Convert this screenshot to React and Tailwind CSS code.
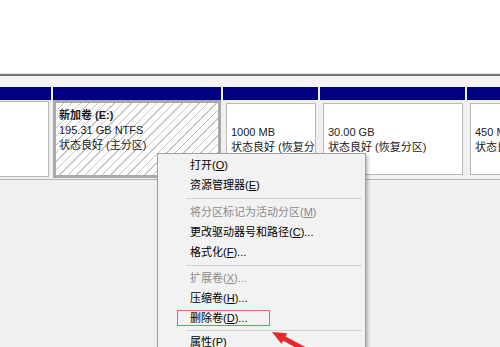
import React from 'react';

const font = "font-['Liberation_Sans','Noto_Sans_CJK_SC',sans-serif]";

const Key = ({ k }) => (
  <>
    (<span className="underline underline-offset-1">{k}</span>)
  </>
);

const MenuItem = ({ label, k, dots, disabled, boxed }) => (
  <div className={`relative flex h-[20px] items-center pl-[32px] text-[11px] ${disabled ? 'text-[#8a8a8a]' : 'text-black'}`}>
    {boxed && <div className="absolute left-[19px] top-[2px] h-[16px] w-[93px] border border-[#e46a6a]" />}
    <span>
      {label}
      <Key k={k} />
      {dots ? '...' : ''}
    </span>
  </div>
);

const Sep = ({ h }) => (
  <div className={`flex items-center pl-[28px] pr-[3px] ${h}`}>
    <div className="h-px w-full bg-[#d4d4d4]" />
  </div>
);

const Partition = ({ w, title, size, status, hatched, first }) => (
  <div className={`flex shrink-0 flex-col ${w}`}>
    <div className="h-[13px] bg-[#000080]" />
    <div className={`h-[78px] ${hatched ? 'p-0' : first ? 'py-[1px] pr-[2px]' : 'p-[3px] pr-[2px]'}`}>
      <div
        className={`h-full overflow-hidden whitespace-nowrap text-[11px] leading-[15px] text-[#1a1a1a] ${
          hatched
            ? 'border-[3px] border-[#a9a9a9] bg-[repeating-linear-gradient(135deg,#ffffff_0px,#ffffff_5px,#c4c4c4_5px,#c4c4c4_6px)] pl-[3px] pt-[5px]'
            : first
            ? 'border border-l-0 border-[#b9b9b9] bg-white'
            : 'border border-[#b9b9b9] bg-white pl-[4px] pt-[6px]'
        }`}
      >
        <div className="h-[15px] font-bold">{title}</div>
        <div>{size}</div>
        <div>{status}</div>
      </div>
    </div>
  </div>
);

export default function App() {
  return (
    <div className={`relative h-[347px] w-[500px] overflow-hidden bg-[#f0f0f0] ${font}`}>
      <div className="h-[73px] bg-white" />
      <div className="h-px bg-[#e4e4e4]" />
      <div className="h-[2px] bg-[#747474]" />
      <div className="h-[11px] bg-[#f4f4f4]" />

      <div className="flex gap-[2px] bg-[#f0f0f0]">
        <Partition w="w-[51px]" first />
        <Partition w="w-[168px]" hatched title="新加卷 (E:)" size="195.31 GB NTFS" status="状态良好 (主分区)" />
        <Partition w="w-[95px]" size="1000 MB" status="状态良好 (恢复分区)" />
        <Partition w="w-[145px]" size="30.00 GB" status="状态良好 (恢复分区)" />
        <Partition w="w-[40px]" size="450 MB" status="状态良好 (恢复分区)" />
      </div>

      <div className="mt-[1px] h-px bg-[#b4b4b4]" />

      {/* context menu */}
      <div className="absolute left-[157px] top-[153px] w-[209px] border border-[#a0a0a0] bg-[#f2f2f2] pt-[1px] shadow-[2px_2px_3px_rgba(0,0,0,0.25)]">
        <MenuItem label="打开" k="O" />
        <MenuItem label="资源管理器" k="E" />
        <Sep h="h-[7px]" />
        <MenuItem label="将分区标记为活动分区" k="M" disabled />
        <MenuItem label="更改驱动器号和路径" k="C" dots />
        <MenuItem label="格式化" k="F" dots />
        <Sep h="h-[6px]" />
        <MenuItem label="扩展卷" k="X" dots disabled />
        <MenuItem label="压缩卷" k="H" dots />
        <MenuItem label="删除卷" k="D" dots boxed />
        <Sep h="h-[4px]" />
        <MenuItem label="属性" k="P" />
      </div>

      {/* annotation arrow */}
      <svg className="absolute left-[260px] top-[325px]" width="60" height="22" viewBox="0 0 60 22">
        <polygon
          points="12,7 27.1,8.3 25.5,11.4 60.7,30.2 58.3,34.6 23.1,15.8 21.5,18.9"
          fill="#e5282a"
        />
      </svg>
    </div>
  );
}
